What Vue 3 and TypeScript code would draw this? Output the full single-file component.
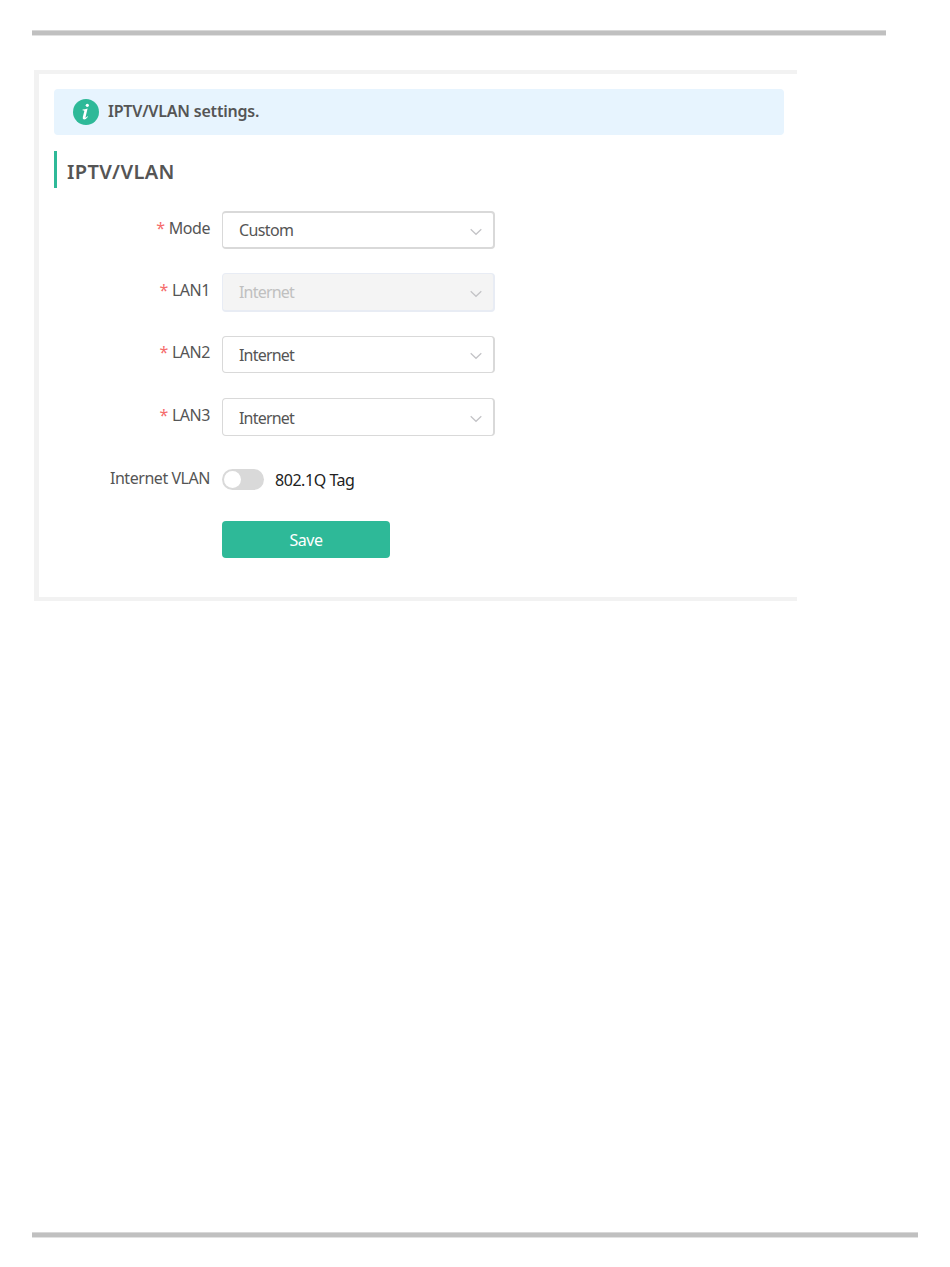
<script setup lang="ts">
import { ref } from 'vue'

interface SelectField {
  key: string
  label: string
  value: string
  disabled?: boolean
}

const fields = ref<SelectField[]>([
  { key: 'mode', label: 'Mode', value: 'Custom' },
  { key: 'lan1', label: 'LAN1', value: 'Internet', disabled: true },
  { key: 'lan2', label: 'LAN2', value: 'Internet' },
  { key: 'lan3', label: 'LAN3', value: 'Internet' }
])

const vlanEnabled = ref(false)

function toggleVlan() {
  vlanEnabled.value = !vlanEnabled.value
}
</script>

<template>
  <div class="page">
    <div class="rule rule-top"></div>

    <main class="panel">
      <div class="alert">
        <svg class="alert-icon" viewBox="0 0 26 26">
          <circle cx="13" cy="13" r="13" fill="#2eb998" />
          <circle cx="14.3" cy="6.3" r="1.6" fill="#fff" />
          <path
            d="M9.6 10.6Q11.8 10.4 14.6 9.6L12.5 18.2Q12.4 19 13 18.6L14.6 17.2L15 17.7Q12.8 20.6 11 20.4Q9.3 20.2 9.8 18.1L11.3 12.3Q11.5 11.4 10.6 11.4L9.5 11.3Z"
            fill="#fff"
          />
        </svg>
        <span class="alert-text">IPTV/VLAN settings.</span>
      </div>

      <h2 class="title"><span>IPTV/VLAN</span></h2>

      <form class="form" @submit.prevent>
        <div v-for="field in fields" :key="field.key" class="form-item" :class="field.key">
          <label class="label"><span class="required">*</span><span class="name">{{ field.label }}</span></label>
          <div class="select" :class="{ disabled: field.disabled }">
            <span class="value">{{ field.value }}</span>
            <svg class="arrow" viewBox="0 0 12 8">
              <path d="M.7 1.2L6 6.3L11.3 1.2" fill="none" stroke="#c3c3c6" stroke-width="1.2" />
            </svg>
          </div>
        </div>

        <div class="form-item vlan">
          <label class="label"><span class="name">Internet VLAN</span></label>
          <button type="button" class="switch" :class="{ on: vlanEnabled }" @click="toggleVlan">
            <span class="knob"></span>
          </button>
          <span class="switch-text">802.1Q Tag</span>
        </div>

        <button type="submit" class="save">Save</button>
      </form>
    </main>

    <div class="rule rule-bottom"></div>
  </div>
</template>

<style>
body {
  margin: 0;
  background: #fff;
}
</style>

<style scoped>
.page {
  display: flex;
  flex-direction: column;
  box-sizing: border-box;
  width: 950px;
  height: 1267px;
  padding: 30px 32px 29px;
  font-family: "Noto Sans", "Open Sans", sans-serif;
  font-size: 16px;
  color: #555;
}

.rule {
  box-sizing: border-box;
  height: 6px;
  background: #c0c0c0;
  border-top: 1px solid #d8d8d8;
  border-bottom: 1px solid #e2e2e2;
}

.rule-top {
  width: 854px;
}

.rule-bottom {
  width: 886px;
  margin-top: auto;
}

.panel {
  box-sizing: border-box;
  width: 763px;
  height: 531px;
  margin: 34px 0 0 2px;
  padding: 15px 13px 0 15px;
  border: solid #f2f2f2;
  border-width: 4px 0 4px 5px;
}

.alert {
  display: flex;
  align-items: center;
  box-sizing: border-box;
  width: 730px;
  height: 46px;
  padding-left: 19px;
  background: #e7f4fe;
  border-radius: 4px;
}

.alert-icon {
  width: 26px;
  height: 26px;
}

.alert-text {
  margin: -3px 0 0 9px;
  font-size: 16px;
  font-weight: 600;
  letter-spacing: -0.2px;
}

.title {
  display: flex;
  align-items: center;
  box-sizing: border-box;
  height: 37px;
  margin: 16px 0 23px;
  padding: 4px 0 0 10px;
  border-left: 3px solid #2eb998;
  font-size: 20px;
  font-weight: 600;
  letter-spacing: 0.35px;
}

.form-item {
  display: flex;
  align-items: center;
}

.mode {
  height: 38px;
  margin-bottom: 24px;
}

.lan1 {
  height: 39px;
  margin-bottom: 24px;
}

.lan2 {
  height: 37px;
  margin-bottom: 25px;
}

.lan3 {
  height: 38px;
  margin-bottom: 33px;
}

.label {
  display: flex;
  justify-content: flex-end;
  width: 156px;
  margin: -5px 12px 0 0;
  line-height: 22px;
  letter-spacing: -0.45px;
  white-space: nowrap;
}

.vlan .label {
  margin-top: -3px;
}

.required {
  margin-right: 4px;
  color: #f56c6c;
}

.select {
  display: flex;
  justify-content: space-between;
  align-items: center;
  box-sizing: border-box;
  width: 273px;
  height: 100%;
  padding: 0 11px 0 16px;
  border: 1px solid #d9d9d9;
  border-right-width: 2px;
  border-radius: 4px;
  letter-spacing: -0.8px;
}

.mode .select {
  border-width: 2px 2px 2px 1px;
  letter-spacing: -0.6px;
}

.lan3 .value {
  margin-top: 2px;
}

.select.disabled {
  background: #f4f4f4;
  border-color: #e8ecf4;
  border-bottom-width: 2px;
  color: #c0c0c0;
}

.arrow {
  width: 12px;
  height: 8px;
  margin-top: 3px;
}

.vlan {
  height: 21px;
  margin-bottom: 31px;
}

.switch {
  display: flex;
  align-items: center;
  width: 42px;
  height: 21px;
  padding: 0 2px;
  border: none;
  border-radius: 11px;
  background: #d9d9d9;
  cursor: pointer;
}

.switch.on {
  justify-content: flex-end;
  background: #2eb998;
}

.knob {
  width: 17px;
  height: 17px;
  border-radius: 50%;
  background: #fff;
}

.switch-text {
  margin-left: 11px;
  color: #222;
  letter-spacing: -0.45px;
}

.save {
  display: block;
  width: 168px;
  height: 37px;
  margin-left: 168px;
  padding: 0;
  border: none;
  border-radius: 4px;
  background: #2eb998;
  color: #fff;
  font-family: inherit;
  font-size: 16px;
  letter-spacing: -0.5px;
  cursor: pointer;
}
</style>
